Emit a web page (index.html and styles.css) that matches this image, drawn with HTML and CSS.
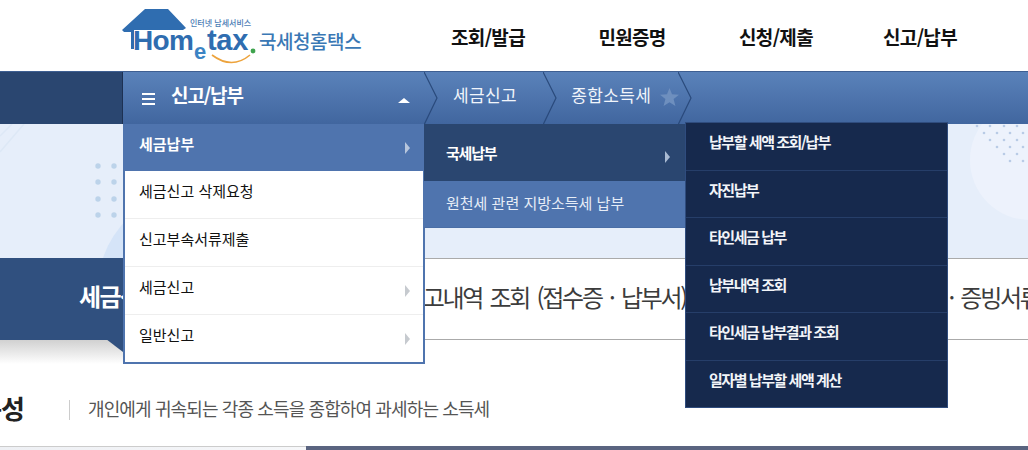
FILE: index.html
```html
<!DOCTYPE html>
<html lang="ko">
<head>
<meta charset="utf-8">
<title>국세청 홈택스</title>
<link rel="stylesheet" href="styles.css">
</head>
<body>
<div class="page">
  <header class="top">
    <a class="logo">
      <svg width="245" height="66" viewBox="0 0 245 66">
        <path d="M0 21 L23 0 L46 0 L64 19 L61 21 L22 21 L12 21 L12 40 L9 40 L9 23 L2 23 Z" fill="#2f6db0"/>
        <text x="68" y="17" class="logo-small">인터넷 납세서비스</text>
        <text x="11" y="41" class="logo-home">Hom</text>
        <text x="72" y="50" class="logo-e">e</text>
        <text x="85" y="41" class="logo-home logo-tax">tax</text>
        <circle cx="131" cy="42" r="2.4" fill="#3fa34d"/>
        <path d="M90 46 Q110 61 128 46" fill="none" stroke="#eda33c" stroke-width="1.6"/>
        <text x="137" y="40" class="logo-kr">국세청홈택스</text>
      </svg>
    </a>
    <nav class="gnb">
      <span>조회/발급</span><span>민원증명</span><span>신청/제출</span><span>신고/납부</span>
    </nav>
  </header>

  <div class="bar">
    <div class="bar-side"></div>
    <div class="bar-head">
      <span class="burger"><i></i><i></i><i></i></span>
      <span class="bar-title">신고/납부</span>
      <span class="caret"></span>
    </div>
    <div class="crumbs">
      <svg class="chev" width="14" height="53" viewBox="0 0 14 53"><path d="M0 0 L13 26 L0 53" fill="none" stroke="#2a4a7c" stroke-width="1.2"/></svg>
      <span class="crumb crumb-a">세금신고</span>
      <svg class="chev" width="14" height="53" viewBox="0 0 14 53"><path d="M0 0 L13 26 L0 53" fill="none" stroke="#2a4a7c" stroke-width="1.2"/></svg>
      <span class="crumb crumb-b">종합소득세</span>
      <svg class="star" width="19" height="18" viewBox="0 0 19 18"><path d="M9.5 0 L12 6.3 L19 6.8 L13.6 11.1 L15.4 18 L9.5 14.2 L3.6 18 L5.4 11.1 L0 6.8 L7 6.3 Z" fill="#6e8fbe"/></svg>
      <svg class="chev" width="14" height="53" viewBox="0 0 14 53"><path d="M0 0 L13 26 L0 53" fill="none" stroke="#2a4a7c" stroke-width="1.2"/></svg>
    </div>

    <ul class="menu m1">
      <li class="on">세금납부<b class="arr"></b></li>
      <li>세금신고 삭제요청</li>
      <li>신고부속서류제출</li>
      <li>세금신고<b class="arr"></b></li>
      <li>일반신고<b class="arr"></b></li>
    </ul>
    <ul class="menu m2">
      <li class="on">국세납부<b class="arr"></b></li>
      <li>원천세 관련 지방소득세 납부</li>
    </ul>
    <ul class="menu m3">
      <li>납부할 세액 조회/납부</li>
      <li>자진납부</li>
      <li>타인세금 납부</li>
      <li>납부내역 조회</li>
      <li>타인세금 납부결과 조회</li>
      <li>일자별 납부할 세액 계산</li>
    </ul>
  </div>

  <section class="banner">
    <svg class="deco" width="1028" height="134" viewBox="0 0 1028 134">
      <path d="M0 28 L24 0 M0 12 L12 0" stroke="#dde8f6" stroke-width="1.5" fill="none"/>
      <path d="M103 134 Q110 112 130 92 L130 134 Z" fill="#d5e4f8"/>
      <g fill="#bcd3ea">
        <circle cx="98" cy="42" r="2.7"/><circle cx="114" cy="42" r="2.7"/>
        <circle cx="98" cy="58" r="2.7"/><circle cx="114" cy="58" r="2.7"/>
        <circle cx="98" cy="75" r="2.7"/><circle cx="114" cy="75" r="2.7"/>
        <circle cx="98" cy="91" r="2.7"/><circle cx="114" cy="91" r="2.7"/>
      </g>
      <circle cx="1030" cy="36" r="60" fill="#edf2fc"/>
      <g fill="#b9cbe6">
        <circle cx="977" cy="2" r="1.3"/><circle cx="990" cy="2" r="1.3"/><circle cx="1004" cy="2" r="1.3"/><circle cx="1017" cy="2" r="1.3"/>
        <circle cx="984" cy="9" r="1.3"/><circle cx="997" cy="9" r="1.3"/><circle cx="1010" cy="9" r="1.3"/><circle cx="1023" cy="9" r="1.3"/>
        <circle cx="990" cy="16" r="1.3"/><circle cx="1004" cy="16" r="1.3"/><circle cx="1017" cy="16" r="1.3"/>
        <circle cx="997" cy="23" r="1.3"/><circle cx="1010" cy="23" r="1.3"/><circle cx="1023" cy="23" r="1.3"/>
        <circle cx="1004" cy="30" r="1.3"/><circle cx="1017" cy="30" r="1.3"/>
        <circle cx="1010" cy="37" r="1.3"/><circle cx="1023" cy="37" r="1.3"/>
      </g>
    </svg>
  </section>

  <section class="tabs">
    <div class="tab tab-on">세금신고 작성</div>
    <div class="tab tab-mid">신고내역 조회 (접수증 · 납부서)</div>
    <div class="tab tab-end">첨부서류 · 증빙서류</div>
  </section>

  <section class="intro">
    <h2 class="intro-title"><span>개요 구성</span></h2>
    <p class="intro-desc">개인에게 귀속되는 각종 소득을 종합하여 과세하는 소득세</p>
  </section>

  <div class="foot"><div class="foot-fill"></div></div>
</div>
</body>
</html>
```
FILE: styles.css
```css
* { box-sizing: border-box; }
html, body { margin: 0; padding: 0; background: #fff; }
body { font-family: "Noto Sans CJK KR", "Noto Sans", sans-serif; overflow: hidden; }
.page { width: 1028px; height: 450px; overflow: hidden; position: relative; }
ul { list-style: none; margin: 0; padding: 0; }

.top { height: 71px; display: flex; padding-left: 122px; background: #fff; }
.logo { display: block; width: 245px; height: 66px; margin-top: 9px; flex: none; }
.logo svg { display: block; }
.logo-small { font-size: 8px; fill: #4b7db5; font-weight: 500; }
.logo-home { font-family: "Liberation Sans", sans-serif; font-size: 28px; font-weight: 700; fill: #2f6db0; letter-spacing: -.6px; }
.logo-tax { font-size: 29px; letter-spacing: -.3px; }
.logo-e { font-family: "Liberation Sans", sans-serif; font-size: 22px; font-weight: 700; fill: #3c84c4; }
.logo-kr { font-size: 19px; font-weight: 500; fill: #3a78b5; letter-spacing: -.45px; }
.gnb { display: flex; margin-left: 49px; }
.gnb span { width: 144px; text-align: center; font-size: 19px; font-weight: 700; line-height: 73px; letter-spacing: -.7px; color: #111; }

.bar { height: 53px; display: flex; position: relative; border-top: 1px solid #3e5f92; background: linear-gradient(#5a82ba, #41669f); color: #fff; z-index: 2; }
.bar-side { width: 123px; background: #2a4670; border-right: 1px solid #1d3153; }
.bar-head { width: 301px; display: flex; align-items: center; padding-left: 19px; }
.burger { display: flex; flex-direction: column; gap: 3px; width: 13px; margin-top: 1px; }
.burger i { display: block; height: 2px; background: #fff; }
.bar-title { font-size: 19px; font-weight: 700; letter-spacing: -1.1px; margin: -6px 0 0 16px; flex: 1; line-height: 50px; }
.caret { width: 0; height: 0; border: 6px solid transparent; border-top: 0; border-bottom: 5px solid #fff; margin: 4px 14px 0 0; }
.crumbs { display: flex; align-items: stretch; }
.chev { display: block; flex: none; }
.crumb { font-size: 17px; line-height: 46px; color: #f1f5fb; letter-spacing: .4px; }
.crumb-a { margin: 0 26px 0 15px; }
.crumb-b { margin: 0 9px 0 14px; }
.star { align-self: center; margin: -2px -1px 0 0; flex: none; }

.menu { position: absolute; font-size: 15px; }
.m1 { left: 123px; top: 52px; width: 302px; background: #fff; border: 2px solid #4f74ae; border-top: 0; color: #111; }
.m1 li { height: 48px; line-height: 40px; padding-left: 14px; border-bottom: 1px solid #eee; position: relative; }
.m1 li:last-child { height: 47px; border-bottom: 0; }
.m1 li.on { height: 47px; margin: 0 -2px; padding-left: 16px; background: #4f74ae; color: #fff; font-weight: 700; border: 0; }
.arr { position: absolute; right: 13px; top: 18px; width: 0; height: 0; border: 6px solid transparent; border-left: 5px solid #c6cacf; border-right: 0; }
.m1 li.on .arr { right: 15px; border-left-color: #b7c6dd; }
.m2 { left: 424px; top: 52px; width: 262px; color: #fff; }
.m2 li { height: 47px; line-height: 43px; padding-left: 22px; background: #4f74ae; color: #e6edf7; position: relative; border-bottom: 1px solid #4a6ea6; }
.m2 li.on { height: 57px; line-height: 58px; background: #2a4670; color: #fff; font-weight: 700; border-bottom: 0; letter-spacing: -1.2px; }
.m2 .arr { right: 16px; top: 27px; border-left-color: #a9bad3; }
.m3 { left: 685px; top: 50px; width: 263px; height: 286px; background: #16294d; border: 1px solid #2f4c7e; color: #f2f4f8; font-weight: 700; letter-spacing: -1.45px; }
.m3 li { height: 47.6px; line-height: 37px; padding-left: 23px; border-bottom: 1px solid #263e69; }
.m3 li:last-child { border-bottom: 0; }

.banner { height: 134px; background: #e6eefa; position: relative; overflow: hidden; }
.deco { position: absolute; left: 0; top: 0; display: block; }

.tabs { height: 82px; display: flex; position: relative; z-index: 1; white-space: nowrap; border-top: 1px solid #aaa; border-bottom: 1px solid #aaa; }
.tab { font-size: 24px; line-height: 76px; letter-spacing: -2.3px; word-spacing: 3px; color: #3c3c3c; }
.tab-on { width: 403px; flex: none; margin: -1px 0; height: 82px; background: #30507f; color: #fff; font-weight: 700; padding-left: 79px; position: relative; letter-spacing: -1.7px; }
.tab-on::before { content: ""; position: absolute; left: 0; right: 0; top: 81px; height: 25px; background: linear-gradient(#cfcfcf, #fff); z-index: -1; }
.tab-on::after { content: ""; position: absolute; left: 106px; top: 81px; width: 0; height: 0; border-style: solid; border-width: 13px 17px 0 0; border-color: #30507f transparent transparent transparent; transform: scaleX(-1); }
.tab-mid { width: 459px; flex: none; }
.tab-end { flex: none; }

.intro { height: 106px; display: flex; align-items: flex-start; position: relative; }
.intro-title { width: 24px; height: 30px; margin: 50px 0 0; flex: none; display: flex; justify-content: flex-end; white-space: nowrap; font-size: 26px; line-height: 36px; font-weight: 700; color: #222; letter-spacing: -1px; }
.intro-desc { margin: 60px 0 0 45px; padding-left: 18px; height: 20px; font-size: 18px; line-height: 16px; color: #555; letter-spacing: -.88px; border-left: 1px solid #ccc; white-space: nowrap; }

.foot { height: 4px; border-top: 1px solid #ccc; background: linear-gradient(90deg, #eef0f4, #fff 60%); }
.foot-fill { width: 722px; height: 4px; margin-left: 306px; margin-top: -1px; background: #5a6480; }
```
